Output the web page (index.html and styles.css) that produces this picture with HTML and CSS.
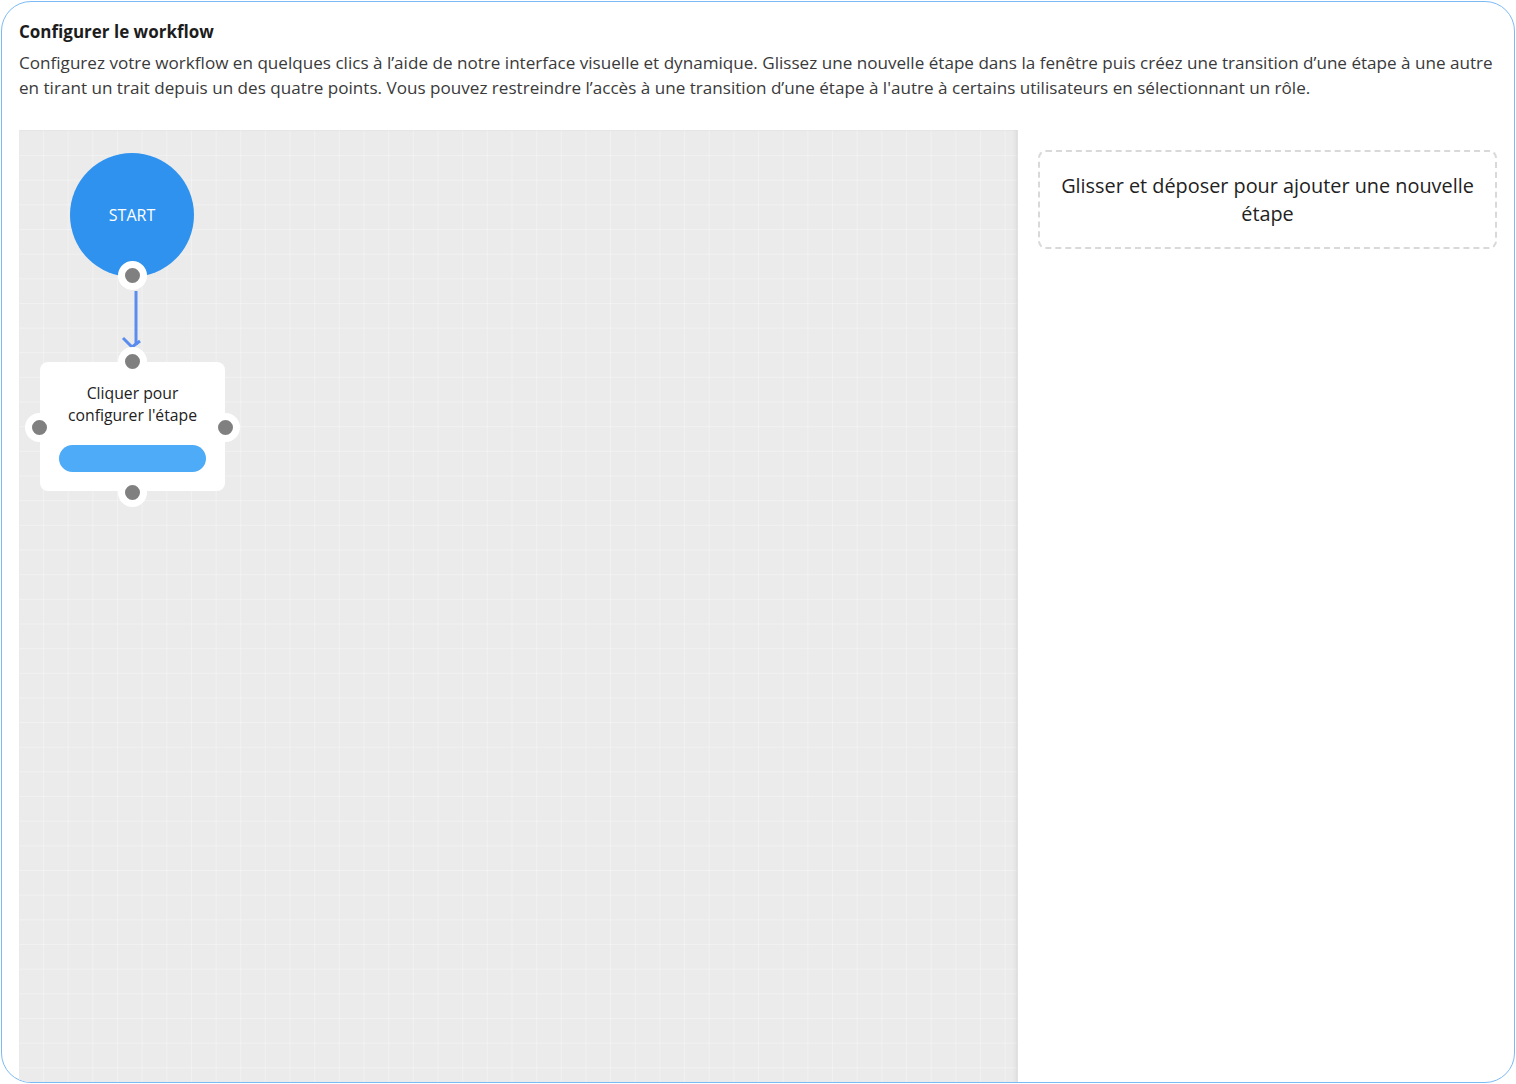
FILE: index.html
```html
<!DOCTYPE html>
<html lang="fr">
<head>
<meta charset="utf-8">
<title>Configurer le workflow</title>
<link rel="stylesheet" href="styles.css">
</head>
<body>
<div class="panel">
  <h1 class="title">Configurer le workflow</h1>
  <p class="desc">Configurez votre workflow en quelques clics à l’aide de notre interface visuelle et dynamique. Glissez une nouvelle étape dans la fenêtre puis créez une transition d’une étape à une autre en tirant un trait depuis un des quatre points. Vous pouvez restreindre l’accès à une transition d’une étape à l'autre à certains utilisateurs en sélectionnant un rôle.</p>
  <div class="main">
    <div class="canvas">
      <div class="start">START</div>
      <span class="port port-start"></span>
      <svg class="arrow" width="30" height="70" viewBox="0 0 30 70">
        <line x1="16" y1="0" x2="16" y2="54" stroke="#5b8def" stroke-width="3"/>
        <polyline points="3,47 12,56 20,50" fill="none" stroke="#5b8def" stroke-width="3"/>
      </svg>
      <div class="step">
        <div class="step-text">Cliquer pour<br>configurer l'étape</div>
        <div class="step-bar"></div>
      </div>
      <span class="port port-top"></span>
      <span class="port port-left"></span>
      <span class="port port-right"></span>
      <span class="port port-bottom"></span>
    </div>
    <div class="side">
      <div class="dropzone">Glisser et déposer pour ajouter une nouvelle étape</div>
    </div>
  </div>
</div>
</body>
</html>
```
FILE: styles.css
```css
html, body {
  margin: 0;
  padding: 0;
  background: #ffffff;
}
body {
  font-family: "Open Sans", "Noto Sans", sans-serif;
  color: #222;
}
.panel {
  box-sizing: border-box;
  margin: 1px 0 0 1px;
  width: 1514px;
  height: 1082px;
  border: 1px solid #7cbaf6;
  border-radius: 30px;
  overflow: hidden;
  padding: 17px 0 0 17px;
  display: flex;
  flex-direction: column;
}
.title {
  margin: 0;
  font-size: 17px;
  font-weight: 700;
  line-height: 26px;
  color: #1c1c1c;
}
.desc {
  margin: 5px 0 0 0;
  font-size: 17.1px;
  line-height: 25px;
  color: #3a3a3a;
  padding-right: 8px;
}
.main {
  flex: 1;
  display: flex;
  margin-top: 30px;
  min-height: 0;
}
.canvas {
  position: relative;
  width: 998px;
  flex: none;
  background-color: #ebebeb;
  background-image:
    linear-gradient(to right, rgba(255,255,255,0.3) 1px, transparent 1px),
    linear-gradient(to bottom, rgba(255,255,255,0.3) 1px, transparent 1px);
  background-size: 24.66px 24.66px;
  background-position: 24px 25px;
  box-shadow: inset -6px 0 4px -4px rgba(0,0,0,0.05), inset 0 1px 2px rgba(0,0,0,0.05);
  border-right: 1px solid #e2e2e2;
  height: 1000px;
}
.start {
  position: absolute;
  left: 51px;
  top: 23px;
  width: 124px;
  height: 124px;
  border-radius: 50%;
  background: #2e92ee;
  color: #fff;
  font-size: 16px;
  font-weight: 500;
  display: flex;
  align-items: center;
  justify-content: center;
}
.port {
  position: absolute;
  width: 15px;
  height: 15px;
  border-radius: 50%;
  background: #808080;
  border: 7px solid #fff;
}
.port-start { left: 98.5px; top: 130.5px; }
.arrow {
  position: absolute;
  left: 101px;
  top: 161px;
}
.step {
  position: absolute;
  left: 21px;
  top: 232px;
  width: 185px;
  height: 129px;
  background: #fff;
  border-radius: 8px;
  box-sizing: border-box;
  padding: 20px 19px 0 19px;
  text-align: center;
}
.step-text {
  font-size: 15.75px;
  line-height: 22px;
  color: #222;
}
.step-bar {
  margin-top: 19px;
  height: 27px;
  border-radius: 14px;
  background: #4dabf7;
}
.port-top { left: 98.5px; top: 216.5px; }
.port-left { left: 5.5px; top: 282.5px; }
.port-right { left: 191.5px; top: 282.5px; }
.port-bottom { left: 98.5px; top: 347.5px; }
.side {
  flex: 1;
  padding: 20px 17px 0 20px;
}
.dropzone {
  box-sizing: border-box;
  height: 99px;
  border: 2px dashed #d9d9d9;
  border-radius: 8px;
  display: flex;
  align-items: center;
  justify-content: center;
  text-align: center;
  font-size: 19.85px;
  line-height: 28px;
  color: #222;
  padding: 0 8px;
}
```
